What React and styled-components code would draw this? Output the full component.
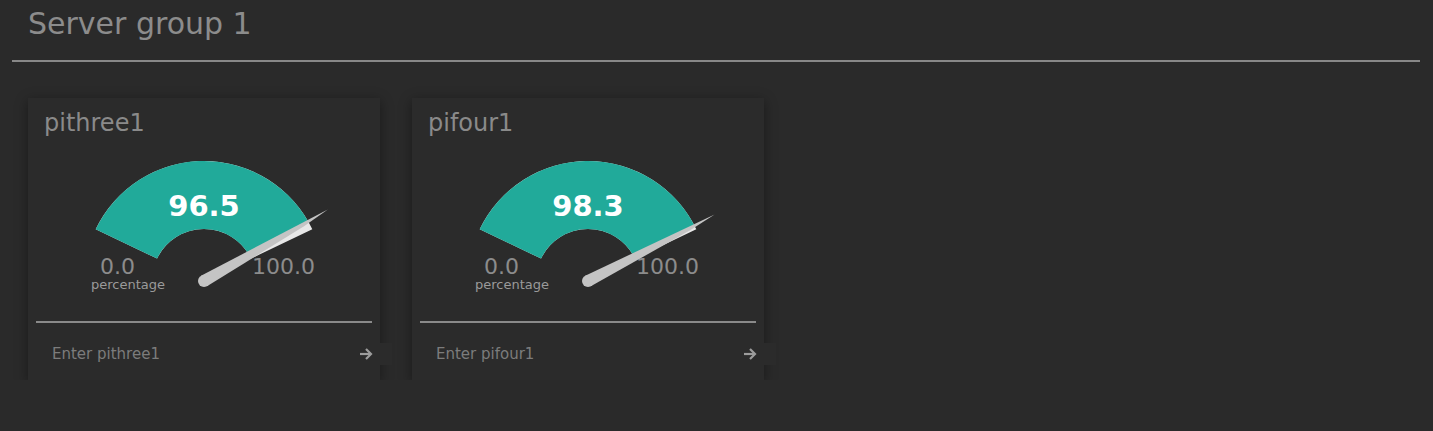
import React from "react";
import styled, { createGlobalStyle } from "styled-components";

const GlobalStyle = createGlobalStyle`
  html, body {
    margin: 0;
    padding: 0;
    background: #2a2a2a;
    font-family: "DejaVu Sans", "Noto Sans", sans-serif;
  }
`;

const Page = styled.div`
  padding: 0 13px 0 12px;
`;

const GroupHeader = styled.div`
  height: 53px;
  padding: 7px 0 0 16px;
  line-height: 34px;
  border-bottom: 2px solid #888;
  color: #8c8c8c;
  font-size: 30px;
`;

const CardRow = styled.div`
  display: flex;
  gap: 32px;
  padding: 36px 0 0 16px;
`;

const Card = styled.div`
  width: 352px;
  height: 282px;
  background: #2b2b2b;
  box-shadow: 0 3px 12px rgba(0, 0, 0, 0.4);
  display: flex;
  flex-direction: column;
`;

const CardTitle = styled.div`
  padding: 11px 0 0 16px;
  height: 28px;
  line-height: 28px;
  font-size: 24px;
  color: #8a8a8a;
`;

const GaugeSvg = styled.svg`
  display: block;
`;

const Divider = styled.div`
  height: 2px;
  margin: 0 8px;
  background: #8a8a8a;
`;

const InputRow = styled.div`
  flex: 1;
  display: flex;
  align-items: center;
  padding-left: 24px;
  padding-top: 4px;
`;

const Field = styled.input`
  flex: 1;
  min-width: 0;
  background: transparent;
  border: none;
  outline: none;
  font-family: inherit;
  font-size: 15px;
  color: #ccc;
  padding: 0;
  &::placeholder {
    color: #7c7c7c;
  }
`;

const SendButton = styled.button`
  width: 52px;
  height: 22px;
  margin-right: -12px;
  display: flex;
  align-items: center;
  justify-content: flex-start;
  padding: 0 0 0 19px;
  border: none;
  background: #2b2b2b;
  color: #9c9c9c;
`;

const CX = 176;
const CY = 144;
const R_OUT = 120;
const R_IN = 52;
const A_START = 154.5;
const A_END = 25.5;

const pt = (a, r) => {
  const rad = (a * Math.PI) / 180;
  return [CX + r * Math.cos(rad), CY - r * Math.sin(rad)];
};

const arcPath = (a0, a1) => {
  const [x0, y0] = pt(a0, R_OUT);
  const [x1, y1] = pt(a1, R_OUT);
  const [x2, y2] = pt(a1, R_IN);
  const [x3, y3] = pt(a0, R_IN);
  return `M${x0} ${y0} A${R_OUT} ${R_OUT} 0 0 1 ${x1} ${y1} L${x2} ${y2} A${R_IN} ${R_IN} 0 0 0 ${x3} ${y3} Z`;
};

function Gauge({ value }) {
  const a = A_START - (value / 100) * (A_START - A_END);
  const rad = (a * Math.PI) / 180;
  const ux = Math.cos(rad);
  const uy = -Math.sin(rad);
  const nx = -uy;
  const ny = ux;
  const at = (d, s) => `${CX + ux * d + nx * s} ${CY + uy * d + ny * s}`;
  const needle = `M${at(0, -6)} L${at(143, 0)} L${at(114, 2.6)} L${at(0, 6)} Z`;

  return (
    <GaugeSvg width="352" height="184" viewBox="0 0 352 184">
      <path d={arcPath(A_START, A_END)} fill="#e8e8e8" />
      <path d={arcPath(A_START, a)} fill="#21aa9a" />
      <text x={CX} y="79" textAnchor="middle" fill="#fff" fontSize="29" fontWeight="bold" fontFamily="DejaVu Sans">
        {value.toFixed(1)}
      </text>
      <text x="89.5" y="137" textAnchor="middle" fill="#8c8c8c" fontSize="22" fontFamily="DejaVu Sans">
        0.0
      </text>
      <text x="255.5" y="137" textAnchor="middle" fill="#8c8c8c" fontSize="22" fontFamily="DejaVu Sans">
        100.0
      </text>
      <text x="100" y="152" textAnchor="middle" fill="#9a9a9a" fontSize="13" fontFamily="DejaVu Sans">
        percentage
      </text>
      <path d={needle} fill="#c4c4c4" />
      <circle cx={CX} cy={CY} r="6" fill="#c4c4c4" />
    </GaugeSvg>
  );
}

const ArrowIcon = () => (
  <svg width="14" height="14" viewBox="0 0 14 14" fill="none" stroke="currentColor" strokeWidth="2.2">
    <path d="M1 7h11" />
    <path d="M7 2l5 5-5 5" />
  </svg>
);

const servers = [
  { name: "pithree1", value: 96.5 },
  { name: "pifour1", value: 98.3 },
];

export default function App() {
  return (
    <>
      <GlobalStyle />
      <Page>
        <GroupHeader>Server group 1</GroupHeader>
        <CardRow>
          {servers.map((s) => (
            <Card key={s.name}>
              <CardTitle>{s.name}</CardTitle>
              <Gauge value={s.value} />
              <Divider />
              <InputRow>
                <Field placeholder={`Enter ${s.name}`} />
                <SendButton>
                  <ArrowIcon />
                </SendButton>
              </InputRow>
            </Card>
          ))}
        </CardRow>
      </Page>
    </>
  );
}
